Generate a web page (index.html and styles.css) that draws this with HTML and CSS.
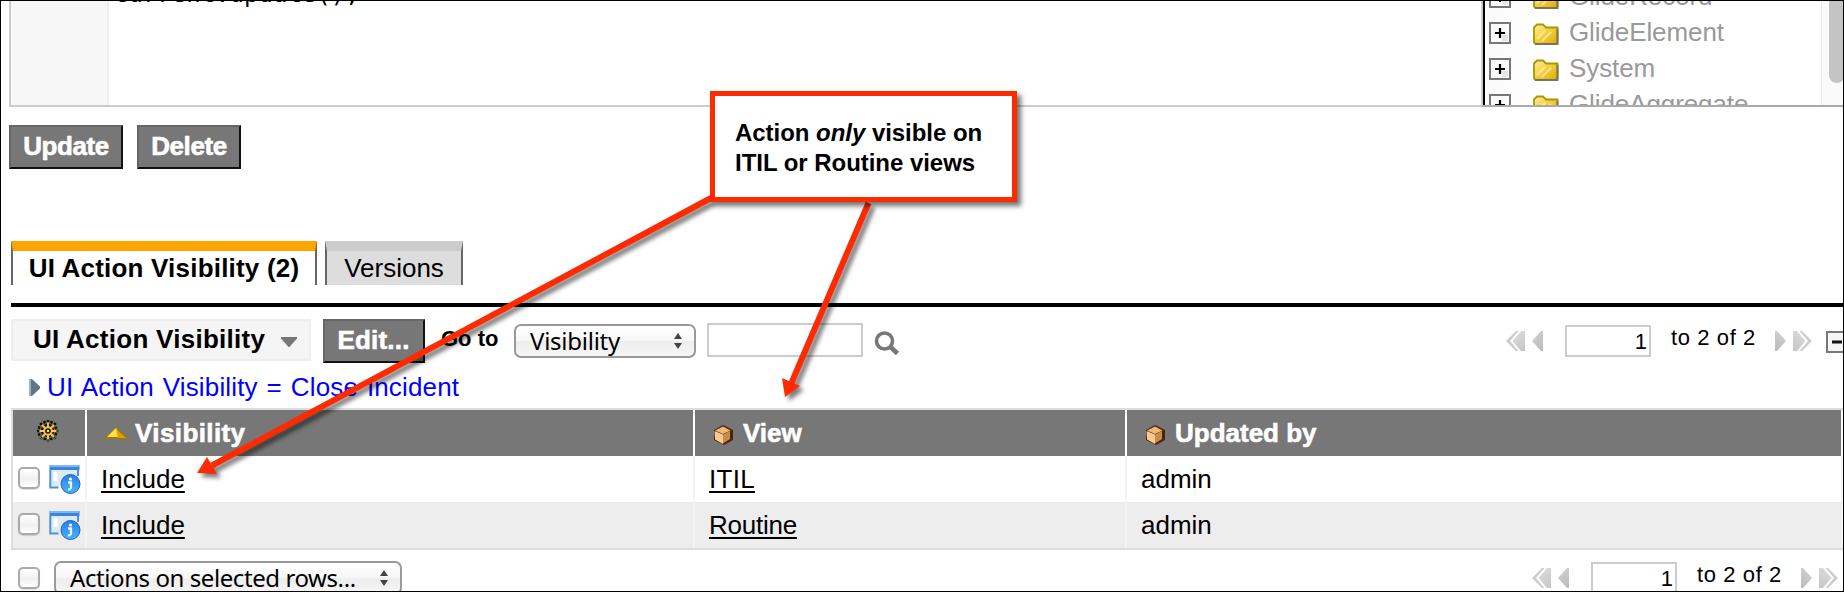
FILE: index.html
```html
<!DOCTYPE html>
<html lang="en">
<head>
<meta charset="utf-8">
<title>UI Action Visibility</title>
<link rel="stylesheet" href="styles.css">
</head>
<body>
<svg class="defs" width="0" height="0">
  <defs>
    <linearGradient id="gold" x1="0" y1="0" x2="1" y2="1"><stop offset="0" stop-color="#ffe9a8"/><stop offset=".4" stop-color="#f8d548"/><stop offset="1" stop-color="#dcab00"/></linearGradient>
    <linearGradient id="blue" x1="0" y1="0" x2="0" y2="1"><stop offset="0" stop-color="#2d7fe0"/><stop offset="1" stop-color="#45b4ff"/></linearGradient>
    <linearGradient id="grey" x1="0" y1="0" x2="1" y2="1"><stop offset="0" stop-color="#ddd"/><stop offset="1" stop-color="#bbb"/></linearGradient>
    <symbol id="plus" viewBox="0 0 22 22"><rect x="1" y="1" width="20" height="20" fill="#fafafa" stroke="#777" stroke-width="2"/><path d="M13 13h6v6h-6z" fill="#e6e6e6"/><path d="M6 11h10M11 6v10" stroke="#000" stroke-width="2.2"/></symbol>
    <symbol id="folder" viewBox="0 0 26 22"><path d="M1 4.500 4 1.500h6l3 3h11.500v15L23 21H2.500L1 19.500z" fill="url(#gold)" stroke="#a39a00" stroke-width="1.800"/><path d="M2 21h22.500V6" fill="none" stroke="#77755a" stroke-width="2"/><path d="M4 16 12 8M9 18l9-9" stroke="#fff0b5" stroke-width="2" opacity=".7"/></symbol>
    <symbol id="cube" viewBox="0 0 22 22"><path d="M11 1 21 6v10l-9 5-10-5V6z" fill="#4a250c"/><path d="m11 2.500 7.500 4L11 10 3 6.500z" fill="#eab877"/><path d="M2.500 7 11 10.500V20L3 15.500z" fill="#f6cb8c"/><path d="m11 10.500 7-3.500v8l-7 4.500z" fill="#c98b48"/></symbol>
    <symbol id="info" viewBox="0 0 32 30"><path d="M1 1h30v5H1z" fill="#3b86dc"/><path d="M1 1h30v2H1z" fill="#82b6ef"/><path d="M1 6h29v8H15L10 23H1z" fill="#dcebfb"/><path d="M1.800 6v17.500H10M29.500 6v6" fill="none" stroke="#4f8fdf" stroke-width="2"/><path d="M7 8v9" stroke="#fff" stroke-width="4"/><circle cx="22" cy="20" r="9.500" fill="url(#blue)" stroke="#2462bf"/><circle cx="22" cy="15" r="1.600" fill="#fff"/><path d="M19.500 18.500h3v5.500q-.5 1.500-3 1.500" fill="none" stroke="#e9f6ff" stroke-width="2.300"/></symbol>
    <symbol id="back" viewBox="0 0 38 20"><path d="M10 0 0 10l10 10h2.500L4 10l8.500-10z" fill="#ccc"/><path d="M19 0v20h-4L6.500 10 15 0zM37 0v20h-2L26 10l9-10z" fill="url(#grey)"/></symbol>
    <symbol id="updown" viewBox="0 0 8 16"><path d="M4 0 8 6H0zM0 10h8l-4 6z" fill="#444"/></symbol>
  </defs>
</svg>
<main class="page">
  <section class="editor">
    <div class="gutter"></div>
    <div class="code">current.update();</div>
    <div class="tree">
      <ul class="nodes">
        <li><svg class="i-plus"><use href="#plus"/></svg><svg class="i-folder"><use href="#folder"/></svg><span>GlideRecord</span></li>
        <li><svg class="i-plus"><use href="#plus"/></svg><svg class="i-folder"><use href="#folder"/></svg><span>GlideElement</span></li>
        <li><svg class="i-plus"><use href="#plus"/></svg><svg class="i-folder"><use href="#folder"/></svg><span>System</span></li>
        <li><svg class="i-plus"><use href="#plus"/></svg><svg class="i-folder"><use href="#folder"/></svg><span>GlideAggregate</span></li>
      </ul>
      <div class="track"><div class="thumb"></div></div>
    </div>
  </section>
  <div class="actions"><button class="btn update">Update</button><button class="btn delete">Delete</button></div>
  <nav class="tabs"><div class="tab active">UI Action Visibility (2)</div><div class="tab versions">Versions</div></nav>
  <header class="listbar">
    <div class="title"><span>UI Action Visibility</span><svg width="16" height="10" viewBox="0 0 16 10"><path d="M0 0h16v1.500L8.500 10h-1L0 1.500z" fill="#777"/></svg></div>
    <button class="btn edit">Edit...</button>
    <b class="goto">Go to</b>
    <div class="select field"><span>Visibility</span><svg width="8" height="16"><use href="#updown"/></svg></div>
    <div class="search"></div>
    <svg class="lens" width="26" height="25" viewBox="0 0 26 25"><circle cx="10.500" cy="10" r="8" fill="none" stroke="#777" stroke-width="3.600"/><path d="m16.500 16 7 6.500" stroke="#777" stroke-width="4.600"/></svg>
    <div class="pager">
      <svg class="nav" width="38" height="20"><use href="#back"/></svg>
      <div class="num">1</div><span class="range">to 2 of 2</span>
      <svg class="nav next" width="38" height="20"><use href="#back"/></svg>
      <svg class="collapse" width="22" height="22" viewBox="0 0 22 22"><rect x="1" y="1" width="20" height="20" fill="#f6f6f6" stroke="#777" stroke-width="2"/><path d="M6 11h10" stroke="#111" stroke-width="3"/></svg>
    </div>
  </header>
  <div class="crumb"><svg width="11" height="17" viewBox="0 0 11 17"><path d="M0 0h3l8 7.500v2L3 17H0z" fill="#607585"/><path d="M0 0h2v17H0z" fill="#9eb2bf"/></svg><a>UI Action Visibility = Close Incident</a></div>
  <section class="table">
    <div class="row head">
      <div class="cell gear"><svg width="22" height="22" viewBox="0 0 22 22"><g stroke="#17140b" stroke-width="2.600" stroke-dasharray="2.600 1"><path d="M11 0v22M0 11h22M3.200 3.200l15.600 15.600M18.800 3.200 3.200 18.800M7 1l8 20M15 1 7 21M1 7l20 8M1 15l20-8"/></g><circle cx="11" cy="11" r="4.800" fill="#e9b42c"/><path d="M11 2.500v17M2.500 11h17M5 5l12 12M17 5 5 17" stroke="#ffc93c" stroke-width="1.900"/><circle cx="11" cy="11" r="2.800" fill="#141414"/><circle cx="11" cy="11" r="1.200" fill="#eee"/></svg></div>
      <div class="cell"><svg class="sort" width="26" height="12" viewBox="0 0 26 12"><path d="M0 12 13 0l13 12z" fill="#9a7a10"/><path d="M4 10 13 1l5 9z" fill="#ffe14a"/><path d="m13 2 10 9h-8z" fill="#e3a000"/></svg><span class="vis">Visibility</span></div>
      <div class="cell"><svg class="i-cube"><use href="#cube"/></svg><span>View</span></div>
      <div class="cell"><svg class="i-cube"><use href="#cube"/></svg><span>Updated by</span></div>
    </div>
    <div class="row">
      <div class="cell tools"><i class="check"></i><svg class="i-info"><use href="#info"/></svg></div>
      <div class="cell"><a>Include</a></div><div class="cell"><a class="itil">ITIL</a></div><div class="cell">admin</div>
    </div>
    <div class="row alt">
      <div class="cell tools"><i class="check"></i><svg class="i-info"><use href="#info"/></svg></div>
      <div class="cell"><a>Include</a></div><div class="cell"><a class="routine">Routine</a></div><div class="cell">admin</div>
    </div>
  </section>
  <footer class="foot">
    <i class="check"></i>
    <div class="select bulk"><span>Actions on selected rows...</span><svg width="8" height="16"><use href="#updown"/></svg></div>
    <div class="pager">
      <svg class="nav" width="38" height="20"><use href="#back"/></svg>
      <div class="num">1</div><span class="range">to 2 of 2</span>
      <svg class="nav next" width="38" height="20"><use href="#back"/></svg>
    </div>
  </footer>
  <svg class="arrows" width="1844" height="592" viewBox="0 0 1844 592">
    <g stroke="#ff2a00" stroke-width="6"><path d="M711 198 212 465.500"/><path d="M868.500 203 791 384"/></g>
    <path d="m197 473 10-16 10 17zM785 397l-3-19 18 8z" fill="#ff2a00"/>
  </svg>
  <aside class="callout">Action <em>only</em> visible on<br>ITIL or Routine views</aside>
</main>
</body>
</html>
```
FILE: styles.css
```css
* { box-sizing: border-box; }
body { margin: 0; background: #fff; }
svg { display: block; flex: none; }
.defs { position: absolute; }
.page {
  position: relative; width: 1844px; height: 592px; overflow: hidden;
  border: 1px solid #000; background: #fff; color: #000;
  font: 26px/30px "Liberation Sans", Arial, sans-serif; white-space: nowrap;
}

/* script editor */
.editor {
  display: flex; height: 106px; margin-left: 8px;
  border-left: 2px solid #ccc; border-bottom: 2px solid #ccc;
}
.gutter { width: 98px; background: #f7f7f7; border-right: 2px solid #eee; }
.code { flex: 1; padding-left: 5px; margin-top: -22px; font: 24px/30px "DejaVu Sans Mono", monospace; }
.tree {
  display: flex; width: 362px; height: 106px; overflow: hidden;
  border-left: 2px solid #ccc; border-bottom: 2px solid #aaa;
  box-shadow: inset 2px 0 #000; background: linear-gradient(90deg, #fafafa, #fff 60px);
}
.nodes { list-style: none; margin: -24px 0 0; padding: 0 0 0 6px; flex: 1; }
.nodes li { display: flex; align-items: center; height: 36px; color: #999; }
.nodes span { letter-spacing: -.1px; padding-top: 1px; }
.i-plus { width: 22px; height: 22px; margin-top: 3px; }
.i-folder { width: 26px; height: 22px; margin: 6px 10px 0 22px; }
.track { width: 22px; background: #fafafa; border-left: 1px solid #e8e8e8; }
.thumb { width: 16px; height: 82px; margin-left: 7px; background: #c4c4c4; border-radius: 0 0 8px 8px; }

/* buttons */
.btn {
  flex: none; height: 44px; padding: 0 0 3px; border: 2px solid; border-color: #666 #111 #111 #666;
  background: #777; color: #fff; font: bold 26px/30px "Liberation Sans", Arial, sans-serif;
  letter-spacing: -.4px; -webkit-text-stroke: .6px #fff;
}
.actions { display: flex; gap: 14px; padding: 18px 0 0 8px; }
.update { width: 114px; }
.delete { width: 104px; }
.edit { width: 102px; padding-right: 1px; letter-spacing: .2px; }

/* tabs */
.tabs { display: flex; gap: 8px; padding: 72px 0 0 10px; }
.tab { height: 44px; padding-top: 2px; text-align: center; border: 2px solid #666; border-top: 10px solid #ccc; border-bottom: 0; background: #ddd; }
.active { width: 306px; background: #fff; border-top-color: orange; font-weight: bold; letter-spacing: .2px; }
.versions { width: 138px; }

/* list header */
.listbar { display: flex; height: 60px; margin: 18px 0 0 10px; padding-top: 12px; border-top: 4px solid #000; }
.title {
  display: flex; align-items: center; flex: none; width: 300px; height: 42px; margin-right: 12px; padding-left: 20px;
  border: 2px solid #eee; background: #f5f5f5; font-weight: bold; letter-spacing: .27px;
}
.title span { padding-bottom: 2px; }
.title svg { margin: 4px 0 0 16px; }
.goto { width: 73px; margin: 5px 0 0 16px; font-size: 22px; }
.select {
  display: flex; align-items: center; justify-content: space-between; flex: none; height: 34px;
  padding: 0 12px 0 14px; border: 2px solid #999; border-radius: 7px;
  background: linear-gradient(#fff, #f7f7f7 50%, #ededed 50%, #f6f6f6);
  font: 24px/30px "Noto Sans", sans-serif; letter-spacing: -.25px;
}
.select span { padding-bottom: 1px; }
.field { width: 182px; margin-top: 5px; }
.search { width: 156px; height: 34px; margin: 4px 0 0 11px; border: 2px solid #ccc; }
.lens { margin: 12px 0 0 11px; }
.pager { display: flex; flex: none; margin-left: auto; font-size: 22px; }
.listbar .pager { width: 337px; margin-top: 6px; }
.nav { margin-top: 6px; }
.num { flex: none; width: 86px; height: 32px; margin: 0 20px 0 21px; padding: 0 2px; border: 2px solid #ccc; text-align: right; }
.range { flex: none; width: 103px; margin-top: -2px; letter-spacing: .6px; }
.next { transform: scaleX(-1); }
.collapse { margin: 6px 0 0 14px; }
.crumb { display: flex; align-items: center; height: 45px; padding: 2px 0 0 28px; color: #00f; letter-spacing: .15px; word-spacing: 1.5px; }
.crumb svg { margin: 1px 7px 0 0; }

/* list */
.table { height: 142px; margin-left: 10px; border: 2px solid #ddd; border-width: 2px 0 2px 2px; }
.row { display: grid; grid-template-columns: 74px 608px 432px 716px; height: 46px; background: #fff; }
.cell { display: flex; align-items: center; padding-left: 14px; border-right: 2px solid #f3f3f3; }
.cell a { text-decoration: underline; text-decoration-thickness: 2px; text-underline-offset: 3px; text-decoration-skip-ink: none; }
.cell .routine { letter-spacing: -.25px; }
.cell .itil { letter-spacing: .3px; }
.head { background: #777; color: #fff; font-weight: bold; -webkit-text-stroke: .6px #fff; }
.head svg { -webkit-text-stroke: 0; }
.head .cell { border-color: #fff; }
.head .gear { padding: 0 0 4px 24px; }
.sort { margin: 0 6px 0 2px; }
.vis { letter-spacing: .4px; }
.i-cube { width: 22px; height: 22px; margin: 4px 9px 0 3px; }
.alt { background: #ededed; }
.row .tools { padding-left: 5px; }
.check {
  flex: none; width: 22px; height: 22px; border: 2px solid #aaa; border-radius: 5px;
  background: linear-gradient(#fff, #f2f2f2 50%, #eee 50%, #fff); box-shadow: 0 1px 1px #0002;
}
.tools .check { margin-top: -2px; }
.i-info { width: 33px; height: 30px; margin-left: 8px; }

/* footer */
.foot { display: flex; padding: 11px 5px 0 17px; }
.foot .check { margin-top: 6px; }
.bulk { width: 348px; margin-left: 14px; letter-spacing: -.42px; }
.foot .pager { margin-top: 1px; }

/* annotations */
.arrows { position: absolute; left: -1px; top: -1px; filter: drop-shadow(4px 4px 2px rgba(0,0,0,.5)); }
.callout {
  position: absolute; left: 709px; top: 90px; width: 307px; height: 111px; padding: 22px 20px;
  border: 5px solid #ff2a00; background: #fff; box-shadow: 4px 4px 5px rgba(0,0,0,.55);
  font: bold 24px/30px "Liberation Sans", Helvetica, sans-serif; letter-spacing: -.04px;
}
```
